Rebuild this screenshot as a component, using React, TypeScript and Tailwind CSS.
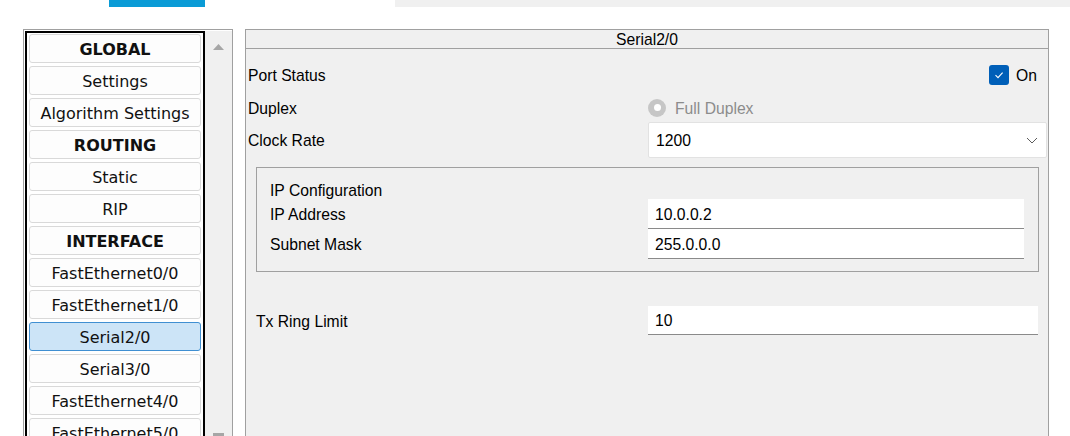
import React from "react";

const navItems = [
  { label: "GLOBAL", bold: true },
  { label: "Settings" },
  { label: "Algorithm Settings" },
  { label: "ROUTING", bold: true },
  { label: "Static" },
  { label: "RIP" },
  { label: "INTERFACE", bold: true },
  { label: "FastEthernet0/0" },
  { label: "FastEthernet1/0" },
  { label: "Serial2/0", selected: true },
  { label: "Serial3/0" },
  { label: "FastEthernet4/0" },
  { label: "FastEthernet5/0" },
];

function NavButton({ label, bold, selected }: { label: string; bold?: boolean; selected?: boolean }) {
  return (
    <div
      className={
        selected
          ? "h-[29px] shrink-0 flex items-center justify-center pt-[2px] rounded-[3px] border border-[#3f8fd2] bg-[#cce4f7] text-[16px] text-[#111]"
          : "h-[29px] shrink-0 flex items-center justify-center pt-[2px] rounded-[3px] border border-[#d9d9d9] bg-[#fdfdfd] text-[16px] text-[#111]"
      }
    >
      <span className={bold ? "font-bold" : ""}>{label}</span>
    </div>
  );
}

export default function App() {
  return (
    <div className="w-[1070px] h-[436px] bg-white overflow-hidden flex flex-col font-['Liberation_Sans',Arial,sans-serif] text-[15.7px] text-black">
      {/* top tab strip */}
      <div className="flex h-[7px] shrink-0">
        <div className="ml-[109px] w-[96px] bg-[#0a9bd6]" />
        <div className="ml-[190px] flex-1 bg-[#f0f0f0]" />
      </div>

      <div className="flex flex-1 min-h-0 pt-[22px] pl-[23px]">
        {/* left navigation */}
        <div className="w-[210px] border border-b-0 border-[#a0a0a0] flex pt-[1px] pl-[1px]">
          <div className="w-[180px] border-2 border-b-0 border-black pt-[1px] px-[2px] flex flex-col gap-[3px] overflow-hidden font-['DejaVu_Sans',Verdana,sans-serif]">
            {navItems.map((item) => (
              <NavButton key={item.label} {...item} />
            ))}
          </div>
          <div className="flex-1 bg-[#f0f0f0] flex flex-col items-center justify-between pt-[13px]">
            <svg width="11" height="6" viewBox="0 0 11 6">
              <polygon points="5.5,0 11,6 0,6" fill="#a6a6a6" />
            </svg>
            <div className="w-[11px] h-[3px] bg-[#a6a6a6]" />
          </div>
        </div>

        {/* right detail panel */}
        <div className="ml-[12px] w-[804px] border border-b-0 border-[#a0a0a0] bg-[#f0f0f0] flex flex-col">
          <div className="h-[19px] pt-[2px] border-b border-[#a0a0a0] flex items-center justify-center">Serial2/0</div>

          <div className="flex flex-col pt-[11px]">
            <div className="h-[30px] flex items-center">
              <div className="w-[402px] pl-[2px] pt-[2px]">Port Status</div>
              <div className="flex-1 flex justify-end items-center gap-[7px] pr-[11px]">
                <div className="w-[20px] h-[20px] rounded-[3px] bg-[#005fb8] flex items-center justify-center">
                  <svg width="12" height="12" viewBox="0 0 12 12">
                    <path d="M2.5 6.2 L5 8.6 L9.6 3.6" fill="none" stroke="white" strokeWidth="1.1" />
                  </svg>
                </div>
                <span className="pt-[2px]">On</span>
              </div>
            </div>

            <div className="h-[28px] mt-[4px] flex items-center">
              <div className="w-[402px] pl-[2px] pt-[2px]">Duplex</div>
              <div className="flex items-center gap-[9px] text-[#8c8c8c]">
                <div className="w-[18px] h-[18px] rounded-full bg-[#c6c6c6] flex items-center justify-center">
                  <div className="w-[7px] h-[7px] rounded-full bg-white" />
                </div>
                <span className="pt-[2px]">Full Duplex</span>
              </div>
            </div>

            <div className="h-[36px] flex items-center">
              <div className="w-[402px] pl-[2px] pt-[2px]">Clock Rate</div>
              <div className="flex-1 h-full mr-[1px] bg-white border border-[#e2e2e2] rounded-[2px] flex items-center justify-between pl-[7px] pr-[8px]">
                <span className="pt-[2px]">1200</span>
                <svg width="12" height="7" viewBox="0 0 12 7">
                  <path d="M1 1 L6 6 L11 1" fill="none" stroke="#5c5c5c" strokeWidth="1" />
                </svg>
              </div>
            </div>

            {/* IP configuration group */}
            <div className="mt-[9px] ml-[10px] mr-[9px] border border-[#a0a0a0] pt-[12px] pb-[12px] flex flex-col">
              <div className="h-[19px] pt-[2px] flex items-center pl-[13px]">IP Configuration</div>
              <div className="h-[30px] flex">
                <div className="w-[391px] pl-[13px] pt-[2px] flex items-center">IP Address</div>
                <div className="flex-1 mr-[14px] bg-white border-b border-[#8a8a8a] flex items-center pl-[7px] pt-[2px]">10.0.0.2</div>
              </div>
              <div className="h-[30px] flex">
                <div className="w-[391px] pl-[13px] pt-[2px] flex items-center">Subnet Mask</div>
                <div className="flex-1 mr-[14px] bg-white border-b border-[#8a8a8a] flex items-center pl-[7px] pt-[2px]">255.0.0.0</div>
              </div>
            </div>

            <div className="h-[29px] mt-[34px] flex">
              <div className="w-[402px] pl-[10px] pt-[2px] flex items-center">Tx Ring Limit</div>
              <div className="flex-1 mr-[10px] bg-white border-b border-[#8a8a8a] flex items-center pl-[7px] pt-[2px]">10</div>
            </div>
          </div>
        </div>
      </div>
    </div>
  );
}
